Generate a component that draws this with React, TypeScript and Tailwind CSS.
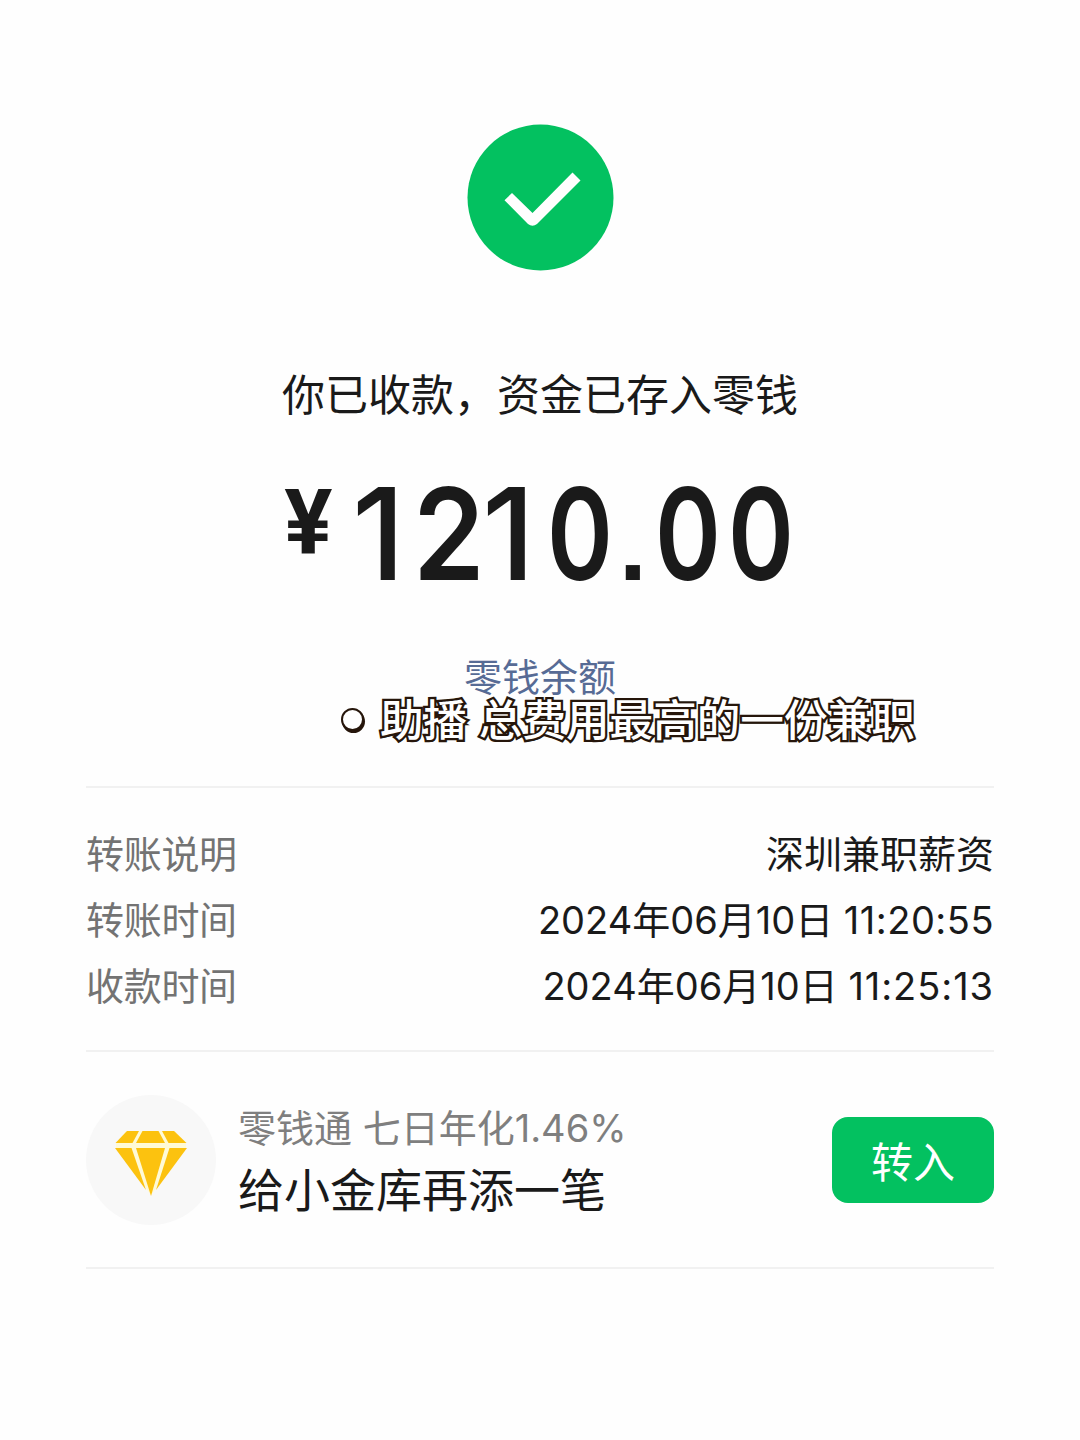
const transferDetails = [
    { label: "转账说明", value: "深圳兼职薪资" },
    {
        label: "转账时间",
        value: "2024年06月10日 ",
        time: "11:20:55",
        tracking: "tracking-[0.5px]",
    },
    {
        label: "收款时间",
        value: "2024年06月10日 ",
        time: "11:25:13",
        tracking: "tracking-[0.95px]",
    },
];

function SuccessIcon() {
    return (
        <svg className="h-[147px] w-[147px]" viewBox="0 0 147 147" fill="none">
            <circle cx="73.5" cy="73.5" r="73" fill="#03C160" />
            <path
                d="M37.5 76.2 L45 69 L65.5 89 L105.5 48.5 L113.5 56.5 L70 100 Q65.5 103.5 61 100 Z"
                fill="#FEFEFE"
            />
        </svg>
    );
}

function DiamondIcon() {
    return (
        <svg className="mt-[6px] h-[66px] w-[74px]" viewBox="0 0 74 66">
            <path
                d="M2 13 L12 1 H61 L72 13 V18 L37 65 L2 18 Z"
                fill="#FFFAD6"
            />
            <g fill="#FCC20F">
                <path d="M13 1 H25 L18.5 13 H1.5 Z" />
                <path d="M28.5 1 H44.5 L51 13 H22 Z" />
                <path d="M48 1 H60 L72.5 13 H54.5 Z" />
                <path d="M1 18 H17.5 L32 60 Z" />
                <path d="M22 18 H51 L37 66 Z" />
                <path d="M55.5 18 H73 L42 60 Z" />
            </g>
        </svg>
    );
}

function Amount() {
    return (
        <div className="mt-[50px] flex h-[126px] items-start pl-[198px] text-[#1a1a1a]">
            <span className="mt-[5px] w-[49px] text-center font-[Roboto,sans-serif] text-[90px] leading-[88px] font-bold">
                ¥
            </span>
            <span className="-mt-px ml-[19px] flex items-baseline font-[Inter,sans-serif] text-[128px] leading-[120px] font-semibold">
                <span className="w-[61px] origin-left font-medium">1</span>
                <span className="w-[69px] origin-left scale-x-[0.9]">2</span>
                <span className="w-[65px] origin-left font-medium">1</span>
                <span className="w-[72px] origin-left scale-x-[0.78]">0</span>
                <span className="w-[36px] font-['Liberation_Sans',sans-serif] text-[100px] font-bold">.</span>
                <span className="w-[73px] origin-left scale-x-[0.78]">0</span>
                <span className="w-[73px] origin-left scale-x-[0.78]">0</span>
            </span>
        </div>
    );
}

function Caption() {
    return (
        <div className="absolute top-[697px] left-[341px] flex h-[48px] items-center">
            <span className="-mt-[3px] h-[23px] w-[23px] rounded-full border-[2.5px] border-[#26160b] bg-white shadow-[1px_2px_0_#26160b]" />
            <span className="ml-[16px] text-[43.6px] leading-[48px] font-medium whitespace-pre text-white [-webkit-text-stroke:4.6px_#26160b] [paint-order:stroke_fill] [text-shadow:1px_2px_0_#26160b]">
                助播 总费用最高的一份兼职
            </span>
        </div>
    );
}

export default function App() {
    return (
        <main className="relative h-[1440px] w-[1080px] overflow-hidden bg-[#fefefe] px-[86px] pt-[124px] font-[Inter,'Noto_Sans_CJK_SC',sans-serif] text-[#1a1a1a]">
            <section className="h-[662px]">
                <div className="flex justify-center">
                    <SuccessIcon />
                </div>
                <h1 className="mt-[94px] text-center text-[43px] leading-[60px] font-normal">
                    你已收款，资金已存入零钱
                </h1>
                <Amount />
                <p className="mt-[50px] text-center text-[38px] leading-[52px] text-[#576b95]">
                    零钱余额
                </p>
            </section>

            <dl className="h-[266px] border-y-2 border-[#f1f1f1] pt-[33px] text-[38px] leading-[66px]">
                {transferDetails.map((item) => (
                    <div key={item.label} className="flex justify-between">
                        <dt className="tracking-[-0.3px] text-[#737373]">
                            {item.label}
                        </dt>
                        <dd>
                            {item.value}
                            {item.time && (
                                <span className={item.tracking}>
                                    {item.time}
                                </span>
                            )}
                        </dd>
                    </div>
                ))}
            </dl>

            <section className="flex h-[217px] items-center border-b-2 border-[#f1f1f1]">
                <div className="flex h-[130px] w-[130px] items-center justify-center rounded-full bg-[#f8f8f8]">
                    <DiamondIcon />
                </div>
                <div className="ml-[22px] flex-1">
                    <p className="text-[38px] leading-[60px] text-[#7f7f7f]">
                        零钱通 七日年化1.46%
                    </p>
                    <p className="text-[46px] leading-[64px]">
                        给小金库再添一笔
                    </p>
                </div>
                <button
                    type="button"
                    className="h-[86px] w-[162px] rounded-2xl bg-[#03c160] pt-[6px] text-[42px] leading-[80px] text-white"
                >
                    转入
                </button>
            </section>

            <Caption />
        </main>
    );
}
